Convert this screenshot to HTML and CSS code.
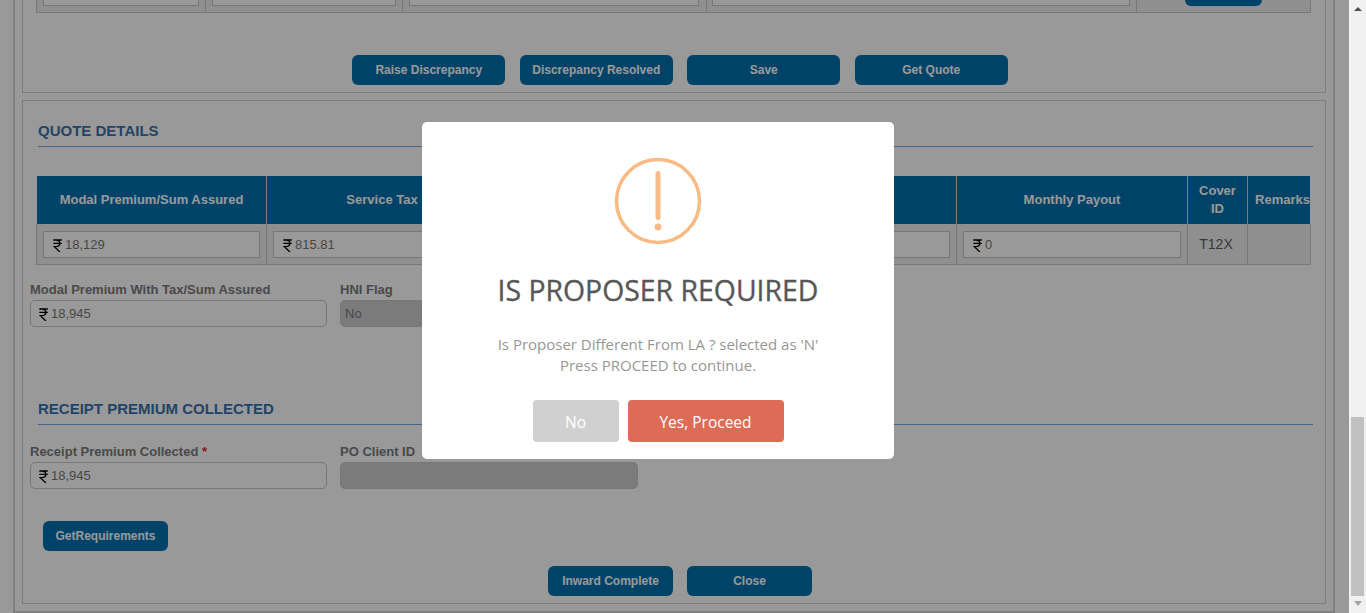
FILE: index.html
```html
<!DOCTYPE html>
<html lang="en">
<head>
<meta charset="utf-8">
<title>Quote Details</title>
<link rel="stylesheet" href="styles.css">
</head>
<body>
<svg class="defs" width="0" height="0" aria-hidden="true">
  <symbol id="inr" viewBox="0 0 9 13">
    <path d="M.3 1H8.8M.3 4.4H8.8M2.6 1C6 1 6.9 2.8 6.9 4.4 6.9 6.5 4.9 7.6 1.4 7.6L6.9 13" fill="none" stroke="#000" stroke-width="1.3"/>
  </symbol>
</svg>
<div class="page">
  <main class="stage">
    <div class="outer">
      <section class="panel panel-top">
        <div class="clip-row">
          <div class="clip-cell"><div class="box"></div></div>
          <div class="clip-cell"><div class="box"></div></div>
          <div class="clip-cell"><div class="box"></div></div>
          <div class="clip-cell"><div class="box"></div></div>
          <div class="clip-cell clip-action"><button class="btn btn-clip" type="button"></button></div>
        </div>
        <div class="actions actions-top">
          <button class="btn btn-wide" type="button">Raise Discrepancy</button>
          <button class="btn btn-wide" type="button">Discrepancy Resolved</button>
          <button class="btn btn-wide" type="button">Save</button>
          <button class="btn btn-wide" type="button">Get Quote</button>
        </div>
      </section>

      <section class="panel panel-main">
        <h2 class="section-title first">QUOTE DETAILS</h2>
        <div class="quote-table">
          <div class="quote-head">
            <div class="th">Modal Premium/Sum Assured</div>
            <div class="th">Service Tax</div>
            <div class="th"></div>
            <div class="th"></div>
            <div class="th">Monthly Payout</div>
            <div class="th th-cover">Cover ID</div>
            <div class="th">Remarks</div>
          </div>
          <div class="quote-row">
            <div class="td"><div class="box"><svg class="rupee"><use href="#inr"/></svg>18,129</div></div>
            <div class="td"><div class="box"><svg class="rupee"><use href="#inr"/></svg>815.81</div></div>
            <div class="td"><div class="box"></div></div>
            <div class="td"><div class="box"></div></div>
            <div class="td"><div class="box"><svg class="rupee"><use href="#inr"/></svg>0</div></div>
            <div class="td td-text">T12X</div>
            <div class="td"></div>
          </div>
        </div>

        <div class="fields fields-quote">
          <div class="field">
            <label class="label">Modal Premium With Tax/Sum Assured</label>
            <div class="box box-round"><svg class="rupee"><use href="#inr"/></svg>18,945</div>
          </div>
          <div class="field">
            <label class="label">HNI Flag</label>
            <div class="box box-round box-off">No</div>
          </div>
        </div>

        <h2 class="section-title second">RECEIPT PREMIUM COLLECTED</h2>
        <div class="fields fields-receipt">
          <div class="field">
            <label class="label">Receipt Premium Collected <span class="req">*</span></label>
            <div class="box box-round"><svg class="rupee"><use href="#inr"/></svg>18,945</div>
          </div>
          <div class="field">
            <label class="label">PO Client ID</label>
            <div class="box box-round box-off"></div>
          </div>
        </div>

        <button class="btn btn-narrow btn-req" type="button">GetRequirements</button>
        <div class="actions actions-bottom">
          <button class="btn btn-narrow" type="button">Inward Complete</button>
          <button class="btn btn-narrow" type="button">Close</button>
        </div>
      </section>
    </div>

    <div class="overlay">
      <div class="modal" role="dialog">
        <svg class="warn" width="88" height="88" viewBox="0 0 88 88" aria-hidden="true">
          <circle cx="44" cy="44" r="41.5" fill="none" stroke="#f8bb86" stroke-width="3.5"/>
          <line x1="44" y1="16.5" x2="44" y2="60.5" stroke="#f8bb86" stroke-width="5" stroke-linecap="round"/>
          <circle cx="44" cy="70" r="3.4" fill="#f8bb86"/>
        </svg>
        <h1 class="modal-title">IS PROPOSER REQUIRED</h1>
        <p class="modal-text">Is Proposer Different From LA ? selected as 'N'<br>Press PROCEED to continue.</p>
        <div class="modal-actions">
          <button class="mbtn mbtn-no" type="button">No</button>
          <button class="mbtn mbtn-yes" type="button">Yes, Proceed</button>
        </div>
      </div>
    </div>
  </main>

  <aside class="scrollbar" aria-hidden="true">
    <span class="arrow arrow-up"></span>
    <span class="track"><span class="thumb"></span></span>
    <span class="arrow arrow-down"></span>
  </aside>
</div>
</body>
</html>
```

FILE: styles.css
```css
* { box-sizing: border-box; }
html, body { margin: 0; height: 100%; overflow: hidden; }
body { font-family: "Liberation Sans", Arial, sans-serif; font-size: 13px; color: #777; background: #fff; }
.defs { display: block; height: 0; }

.page { display: flex; height: 613px; }
.stage { position: relative; flex: 0 0 1349px; height: 613px; overflow: hidden; padding: 0 14px 0 13px; }
.scrollbar { flex: 0 0 17px; display: flex; flex-direction: column; align-items: center; background: #f1f1f1; }
.track { flex: 1; width: 100%; padding: 0 2px; display: flex; flex-direction: column; justify-content: flex-end; }
.thumb { display: block; height: 179px; background: #c1c1c1; }
.arrow { flex: 0 0 17px; width: 0; height: 0; border-left: 4px solid transparent; border-right: 4px solid transparent; }
.arrow-up { margin-top: 7px; flex-basis: 4px; border-bottom: 4px solid #505050; margin-bottom: 6px; }
.arrow-down { margin-top: 5px; margin-bottom: 7px; flex-basis: 4px; border-top: 5px solid #a3a3a3; }

.outer { height: 613px; border-left: 2px solid #d6d6d6; border-right: 2px solid #d6d6d6; border-bottom: 2px solid #d6d6d6; padding: 0 7px; }
.panel { border: 1px solid #d0d0d0; }
.panel-top { border-top: 0; height: 93px; margin-bottom: 7px; }
.panel-main { height: 504px; }

.clip-row { display: grid; grid-template-columns: 169px 197px 304px 430px 173px; grid-template-rows: 12px; height: 13px; margin-left: 13px; width: 1275px; overflow: hidden; border: 1px solid #c8c8c8; border-top: 0; background: #eee; }
.clip-cell { display: flex; align-items: flex-end; height: 12px; padding: 0 6px 6px; border-right: 1px solid #c8c8c8; min-width: 0; }
.clip-cell:nth-child(3) { padding-right: 7px; }
.clip-cell:nth-child(4) { padding-left: 5px; }
.clip-cell:last-child { border-right: 0; }
.clip-cell .box { flex: 1 0 auto; width: 100%; }
.clip-action { justify-content: center; }
.btn-clip { flex: 0 0 77px; width: 77px; }

.box { display: flex; align-items: center; height: 27px; flex: none; padding: 0 9px; border: 1px solid #c6c6c6; background: #fff; color: #777; font-size: 13px; white-space: nowrap; }
.rupee { display: block; flex: none; width: 9px; height: 13px; margin: 1px 3px 0 0; }
.box-round { border-radius: 5px; padding-left: 8px; }
.box-off { background: #cdcdcd; padding: 0 4px; }

.btn { height: 30px; border: 0; border-radius: 6px; padding: 0; background: #0071b0; color: #fff; font: bold 12px "Liberation Sans", Arial, sans-serif; flex: none; }
.btn-wide { width: 153px; }
.btn-narrow { width: 125px; }
.actions { display: flex; justify-content: center; padding-left: 12px; }
.actions-top { margin-top: 42px; gap: 14.5px; }
.actions-bottom { margin-top: 15px; gap: 14px; }
.btn-req { display: block; margin: 32px 0 0 20px; }

.section-title { margin: 0 12px 0 15px; padding-bottom: 5px; font-size: 15px; line-height: 20px; font-weight: bold; color: #3b72ab; border-bottom: 1px solid #74a7e0; }
.section-title.first { margin-top: 20px; }
.section-title.second { margin-top: 72px; }

.quote-table { margin: 29px 0 0 13px; width: 1275px; }
.quote-head, .quote-row { display: grid; grid-template-columns: 230px 231px 230px 229px 231px 60px 63px; }
.quote-head { padding-left: 1px; height: 48px; }
.th { display: flex; align-items: center; justify-content: center; padding: 0 1px; text-align: center; background: #0071b0; color: #fff; font-weight: bold; font-size: 13px; line-height: 18px; border-right: 1px solid #d0d0d0; }
.th-cover { padding: 0 10px; }
.th:last-child { border-right: 0; margin-right: 1px; padding: 0; white-space: nowrap; justify-content: flex-end; }
.quote-row { height: 41px; border-left: 1px solid #c8c8c8; border-bottom: 1px solid #c8c8c8; background: #eee; }
.td { padding: 7px 6px 0; border-right: 1px solid #c8c8c8; }
.td-text { padding: 0 3px 0 0; display: flex; align-items: center; justify-content: center; font-size: 14px; color: #5f5f5f; }

.fields { display: flex; gap: 13px; margin-left: 7px; }
.fields-quote { margin-top: 17px; }
.fields-receipt { margin-top: 19px; }
.field { width: 297px; }
.field + .field { width: 298px; }
.label { display: block; height: 18px; line-height: 15px; font-weight: bold; font-size: 13px; color: #7b7b7b; white-space: nowrap; }
.req { color: #d33; }

.overlay { position: absolute; inset: 0; background: rgba(0, 0, 0, .4); padding: 122px 0 0 422px; }
.modal { width: 472px; height: 337px; background: #fff; border-radius: 5px; text-align: center; padding-top: 35px; font-family: "Open Sans", "Noto Sans", sans-serif; }
.warn { display: block; margin: 0 auto; }
.modal-title { margin: 25px 0 0; font-size: 28.4px; line-height: 40px; font-weight: 400; color: #575757; -webkit-text-stroke: .35px #575757; }
.modal-text { margin: 24px 0 0; font-size: 15px; line-height: 21px; color: #979797; }
.modal-actions { display: flex; justify-content: center; gap: 9px; margin-top: 24px; }
.mbtn { height: 42px; border: 0; border-radius: 4px; padding: 2px 0 0; color: #fff; font: 400 15.5px "Open Sans", "Noto Sans", sans-serif; }
.mbtn-no { width: 86px; background: #d0d0d0; }
.mbtn-yes { width: 156px; background: #dd6b55; }
```
